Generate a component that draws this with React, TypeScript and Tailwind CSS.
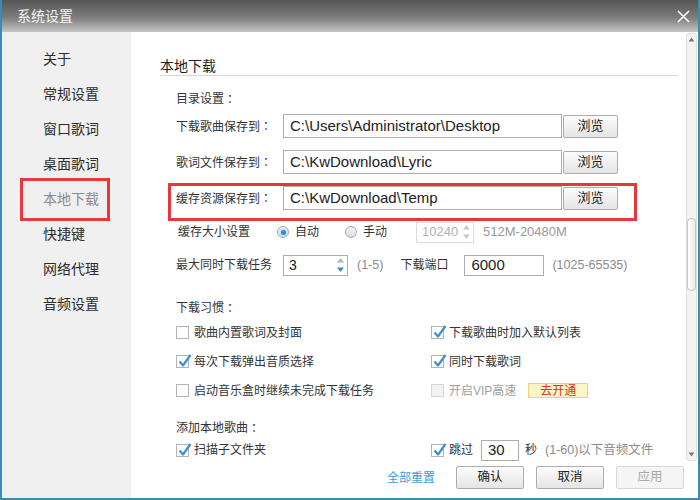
import React from "react";

const sideItems = ["关于", "常规设置", "窗口歌词", "桌面歌词", "本地下载", "快捷键", "网络代理", "音频设置"];

const pathRows = [
  { label: "下载歌曲保存到", value: "C:\\Users\\Administrator\\Desktop" },
  { label: "歌词文件保存到", value: "C:\\KwDownload\\Lyric" },
  { label: "缓存资源保存到", value: "C:\\KwDownload\\Temp", marked: true },
];

// centred full-width colon, as the original UI font draws it
const Colon = () => <span className="font-['Noto_Sans_CJK_TC',sans-serif]">：</span>;

const CheckBox = ({ checked = false, disabled = false }: { checked?: boolean; disabled?: boolean }) => (
  <span
    className={
      "relative w-[13px] h-[13px] shrink-0 border " +
      (disabled ? "border-[#d6d6d6] bg-[#f3f3f3]" : "border-[#b3b3b3] bg-white")
    }
  >
    {checked && (
      <svg className="absolute left-[0px] top-[-3px]" width="15" height="15" viewBox="0 0 15 15">
        <path d="M2.5 8.5 L6 12.5 L13.5 2" stroke="#3d8fcf" strokeWidth="2.2" fill="none" strokeLinejoin="round" />
      </svg>
    )}
  </span>
);

const Radio = ({ on = false }: { on?: boolean }) => (
  <span className="w-[12px] h-[12px] shrink-0 rounded-full border border-[#a9a9a9] bg-[linear-gradient(to_bottom,#f4f4f4,#dedede)] flex items-center justify-center">
    {on && <span className="w-[5px] h-[5px] rounded-full bg-[#2f8be0] shadow-[0_0_0_1.5px_#bfe0f7]" />}
  </span>
);

const Spin = ({ dim = false }: { dim?: boolean }) => (
  <svg width="9" height="16" viewBox="0 0 9 16">
    <path d="M4.5 1 L8 5.5 L1 5.5 Z" fill={dim ? "#c8c8c8" : "#a9b7c2"} />
    <path d="M4.5 15 L8 10.5 L1 10.5 Z" fill={dim ? "#c8c8c8" : "#3f88c7"} />
  </svg>
);

const Btn = ({ children, disabled = false, w = "w-[68px]" }: { children: React.ReactNode; disabled?: boolean; w?: string }) => (
  <button
    className={
      w +
      " h-[23px] rounded-[2px] border flex items-center justify-center text-[12.5px] " +
      (disabled
        ? "border-[#d8d8d8] bg-[#f5f5f5] text-[#a8a8a8]"
        : "border-[#acacac] bg-[linear-gradient(to_bottom,#fdfdfd,#e4e4e4)] text-[#222]")
    }
  >
    {children}
  </button>
);

const Opt = ({ text, checked = false, disabled = false, children }: { text: string; checked?: boolean; disabled?: boolean; children?: React.ReactNode }) => (
  <div className="flex items-center">
    <CheckBox checked={checked} disabled={disabled} />
    <span className={"ml-[5px] text-[12px] " + (disabled ? "text-[#a0a0a0]" : "text-[#333]")}>{text}</span>
    {children}
  </div>
);

export default function App() {
  return (
    <div className="w-[700px] h-[500px] flex flex-col border-x-2 border-b-2 border-[#3b8bb5] bg-white overflow-hidden font-['Liberation_Sans','Noto_Sans_CJK_SC',sans-serif] text-[#333]">
      {/* title bar */}
      <div className="h-[32px] shrink-0 flex items-center justify-between pl-[15px] pr-[8px] bg-[linear-gradient(to_bottom,#555555,#7d7d7d_55%,#c3c3c3)]">
        <span className="text-[14px] text-[#f4f4f4] leading-none">系统设置</span>
        <svg width="13" height="13" viewBox="0 0 13 13">
          <path d="M1 1 L12 12 M12 1 L1 12" stroke="#ffffff" strokeWidth="1.6" />
        </svg>
      </div>

      <div className="flex flex-1 min-h-0">
        {/* sidebar */}
        <div className="w-[129px] shrink-0 bg-[#f0f0f0] pt-[10px]">
          {sideItems.map((s) => (
            <div key={s} className="relative h-[35px] flex items-center pl-[41px]">
              <span className={"text-[14px] " + (s === "本地下载" ? "text-[#8a8a8a]" : "text-[#2b2b2b]")}>{s}</span>
              {s === "本地下载" && (
                <span className="absolute left-[18px] top-[-4px] w-[90px] h-[43px] border-[3px] border-[#e5383d]" />
              )}
            </div>
          ))}
        </div>

        {/* right column */}
        <div className="flex-1 flex flex-col min-w-0">
          <div className="h-[430px] flex">
            <div className="flex-1 pl-[29px] pr-[8px] overflow-hidden">
              <div className="h-[44px] pt-[22px] border-b border-[#d7d7d7]">
                <span className="text-[14px] leading-[18px] text-[#222]">本地下载</span>
              </div>

              <div className="pl-[16px]">
                <div className="mt-[14px] h-[18px] flex items-center text-[12px]">
                  目录设置<Colon />
                </div>

                {pathRows.map((r) => (
                  <div key={r.label} className="relative h-[36px] flex items-center">
                    <span className="w-[107px] text-[12px]">
                      {r.label}
                      <Colon />
                    </span>
                    <div className="w-[279px] h-[24px] border border-[#abadb3] flex items-center pl-[6px] text-[15px] text-[#222]">
                      {r.value}
                    </div>
                    <div className="ml-[1px]">
                      <Btn w="w-[55px]">
                        <span className="text-[13px]">浏览</span>
                      </Btn>
                    </div>
                    {r.marked && (
                      <span className="absolute left-[-8px] top-[3px] w-[469px] h-[38px] border-[3px] border-[#e5383d]" />
                    )}
                  </div>
                ))}

                <div className="h-[32px] flex items-center">
                  <span className="w-[101px] pl-[2px] text-[12px]">缓存大小设置</span>
                  <Radio on />
                  <span className="ml-[6px] text-[12px]">自动</span>
                  <span className="ml-[26px]">
                    <Radio />
                  </span>
                  <span className="ml-[6px] text-[12px]">手动</span>
                  <div className="ml-[29px] w-[58px] h-[21px] border border-[#dcdcdc] flex items-center justify-between pl-[5px] pr-[2px]">
                    <span className="text-[13px] text-[#b0b0b0]">10240</span>
                    <Spin dim />
                  </div>
                  <span className="ml-[9px] text-[13px] text-[#9a9a9a]">512M-20480M</span>
                </div>

                <div className="h-[34px] flex items-center">
                  <span className="w-[107px] text-[12px]">最大同时下载任务</span>
                  <div className="w-[65px] h-[21px] border border-[#abadb3] flex items-center justify-between pl-[5px] pr-[2px]">
                    <span className="text-[14px] text-[#222]">3</span>
                    <Spin />
                  </div>
                  <span className="ml-[9px] text-[12.5px] text-[#8c8c8c]">(1-5)</span>
                  <span className="ml-[17px] text-[12px]">下载端口</span>
                  <div className="ml-[16px] w-[80px] h-[21px] border border-[#abadb3] flex items-center pl-[6px] text-[15px] text-[#222]">
                    6000
                  </div>
                  <span className="ml-[8px] text-[12.5px] text-[#8c8c8c]">(1025-65535)</span>
                </div>

                <div className="mt-[16px] h-[20px] flex items-center text-[12px]">
                  下载习惯<Colon />
                </div>

                <div className="grid grid-cols-[255px_1fr] auto-rows-[29px] items-center">
                  <Opt text="歌曲内置歌词及封面" />
                  <Opt text="下载歌曲时加入默认列表" checked />
                  <Opt text="每次下载弹出音质选择" checked />
                  <Opt text="同时下载歌词" checked />
                  <Opt text="启动音乐盒时继续未完成下载任务" />
                  <Opt text="开启VIP高速" disabled>
                    <span className="ml-[12px] w-[60px] h-[15px] border border-[#f0cf7e] bg-[#fdf4c8] text-[#d2352a] text-[12px] flex items-center justify-center">
                      去开通
                    </span>
                  </Opt>
                </div>

                <div className="mt-[11px] h-[23px] flex items-center text-[12px]">
                  添加本地歌曲<Colon />
                </div>

                <div className="grid grid-cols-[255px_1fr] h-[22px] items-center">
                  <Opt text="扫描子文件夹" checked />
                  <div className="flex items-center">
                    <CheckBox checked />
                    <span className="ml-[5px] text-[12px]">跳过</span>
                    <div className="ml-[8px] w-[38px] h-[21px] border border-[#abadb3] flex items-center pl-[6px] text-[15px] text-[#222]">
                      30
                    </div>
                    <span className="ml-[6px] text-[12px]">秒</span>
                    <span className="ml-[8px] text-[12.5px] text-[#8c8c8c]">(1-60)以下音频文件</span>
                  </div>
                </div>
              </div>
            </div>

            {/* scrollbar */}
            <div className="w-[11px] mr-[1px] my-[1px] rounded-[3px] border border-[#dedede] bg-[#f3f3f3] flex flex-col items-center">
              <svg className="mt-[3px]" width="7" height="5" viewBox="0 0 7 5">
                <path d="M3.5 0.5 L6.5 4.5 L0.5 4.5 Z" fill="#7a7a7a" />
              </svg>
              <div className="mt-[176px] w-[9px] h-[73px] rounded-[4px] border border-[#c6c6c6] bg-[linear-gradient(to_right,#fdfdfd,#ececec)]" />
              <div className="flex-1" />
              <svg className="mb-[3px]" width="7" height="5" viewBox="0 0 7 5">
                <path d="M3.5 4.5 L6.5 0.5 L0.5 0.5 Z" fill="#7a7a7a" />
              </svg>
            </div>
          </div>

          {/* footer */}
          <div className="h-[36px] flex items-start justify-end pt-[4px] pr-[14px]">
            <span className="mt-[3px] mr-[21px] text-[12px] text-[#3d9ad6]">全部重置</span>
            <div className="flex gap-[12px]">
              <Btn>确认</Btn>
              <Btn>取消</Btn>
              <Btn disabled>应用</Btn>
            </div>
          </div>
        </div>
      </div>
    </div>
  );
}
